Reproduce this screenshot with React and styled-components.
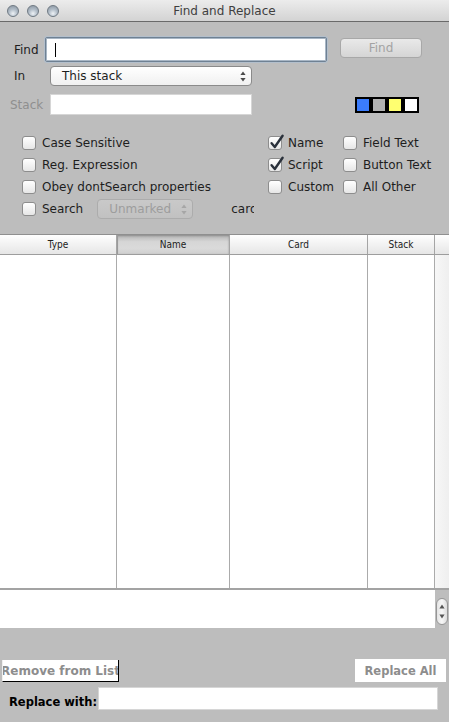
import React from "react";
import styled, { createGlobalStyle } from "styled-components";

const GlobalStyle = createGlobalStyle`
    html, body {
        margin: 0;
        padding: 0;
        background: #bdbdbd;
    }
    * {
        box-sizing: border-box;
    }
`;

const Window = styled.div`
    width: 449px;
    height: 722px;
    overflow: hidden;
    background: #bdbdbd;
    font-family: "DejaVu Sans", "Liberation Sans", sans-serif;
    font-size: 12px;
    color: #1e1e1e;
    display: flex;
    flex-direction: column;
`;

const TitleBar = styled.div`
    height: 22px;
    flex: none;
    display: grid;
    grid-template-columns: 1fr auto 1fr;
    align-items: center;
    background: linear-gradient(#ececec, #d3d3d3);
    border-bottom: 1px solid #6a6a6a;
`;

const Lights = styled.div`
    display: flex;
    gap: 8px;
    padding-left: 7px;
`;

const Light = styled.span`
    width: 12px;
    height: 12px;
    border-radius: 50%;
    border: 1px solid #6f7983;
    background: radial-gradient(circle at 50% 75%, #eef2f6 0%, #b3bec9 45%, #85919d 100%);
`;

const Title = styled.div`
    font-size: 12px;
    color: #3f3f3f;
    padding-top: 1px;
`;

const Form = styled.div`
    display: flex;
    flex-direction: column;
    padding-top: 15px;
`;

const Row = styled.div`
    display: flex;
    align-items: center;
    height: ${({ h }) => h}px;
    margin-top: ${({ mt }) => mt || 0}px;
`;

const Label = styled.span`
    width: ${({ w }) => w}px;
    padding-left: ${({ pl }) => pl}px;
    color: ${({ dim }) => (dim ? "#8f8f8f" : "#1e1e1e")};
    flex: none;
`;

const FindField = styled.div`
    width: 282px;
    height: 25px;
    background: #fff;
    border: 1px solid #6f8193;
    box-shadow: inset 0 0 0 1px #a8b6c5, 0 0 0 1px #b3bfcc;
    border-radius: 2px;
    display: flex;
    align-items: center;
    padding-left: 9px;
`;

const Caret = styled.span`
    width: 1px;
    height: 14px;
    background: #000;
`;

const PushButton = styled.div`
    margin-left: 13px;
    width: 82px;
    height: 20px;
    border: 1px solid #a8a8a8;
    border-radius: 4px;
    background: linear-gradient(#e9e9e9, #d5d5d5);
    color: #a3a3a3;
    display: flex;
    align-items: center;
    justify-content: center;
    align-self: flex-start;
    margin-top: 1px;
`;

const Popup = styled.div`
    width: ${({ w }) => w}px;
    height: 20px;
    border: 1px solid ${({ disabled }) => (disabled ? "#acacac" : "#8a8a8a")};
    border-radius: 4px;
    background: ${({ disabled }) =>
        disabled ? "linear-gradient(#c9c9c9, #c1c1c1)" : "linear-gradient(#ffffff, #f0f0f0)"};
    color: ${({ disabled }) => (disabled ? "#9d9d9d" : "#1e1e1e")};
    display: flex;
    align-items: center;
    justify-content: space-between;
    padding: 0 5px 0 ${({ pl }) => pl}px;
    flex: none;
`;

const PlainField = styled.div`
    width: ${({ w }) => w}px;
    height: ${({ h }) => h}px;
    background: #fff;
    border: 1px solid #d6d6d6;
    flex: none;
`;

const Swatches = styled.div`
    margin-left: 103px;
    display: flex;
    gap: 4px;
    padding: 2px;
    background: #000;
    height: 16px;
`;

const Swatch = styled.span`
    width: 12px;
    height: 12px;
    background: ${({ c }) => c};
`;

const Options = styled.div`
    display: grid;
    grid-template-columns: 246px 75px 1fr;
    grid-auto-rows: 22px;
    align-items: center;
    padding-left: 22px;
    margin-top: 17px;
`;

const CheckItem = styled.div`
    display: flex;
    align-items: center;
    gap: 6px;
    white-space: nowrap;
`;

const Box = styled.span`
    position: relative;
    width: 14px;
    height: 14px;
    border: 1px solid #8d8d8d;
    border-radius: 3px;
    background: linear-gradient(#ffffff, #e6e6e6);
    flex: none;
`;

const Tick = styled.svg`
    position: absolute;
    left: 0px;
    top: -3px;
`;

const SearchRow = styled.div`
    display: flex;
    align-items: center;
    grid-column: 1 / span 3;
`;

const Clipped = styled.span`
    margin-left: 38px;
    width: 23px;
    overflow: hidden;
    white-space: nowrap;
`;

const Table = styled.div`
    margin-top: 14px;
    display: flex;
    flex-direction: column;
`;

const Header = styled.div`
    display: grid;
    grid-template-columns: 117px 113px 138px 67px 14px;
    height: 21px;
    border-top: 1px solid #8f8f8f;
    border-bottom: 1px solid #9d9d9d;
    background: linear-gradient(#fefefe, #e6e6e6);
`;

const HeadCell = styled.div`
    border-right: ${({ last }) => (last ? "none" : "1px solid #a5a5a5")};
    display: flex;
    align-items: center;
    justify-content: center;
    font-family: "DejaVu Sans Condensed", "DejaVu Sans", sans-serif;
    font-size: 10px;
    color: #222;
    background: ${({ active }) =>
        active ? "linear-gradient(#b2b2b2, #d6d6d6 35%, #dadada 70%, #cfcfcf)" : "transparent"};
    box-shadow: ${({ active }) => (active ? "inset 1px 0 0 #9a9a9a, inset 0 1px 2px #8c8c8c" : "none")};
`;

const Body = styled.div`
    display: grid;
    grid-template-columns: 117px 113px 138px 67px 14px;
    height: 335px;
    border-bottom: 2px solid #a3a3a3;
`;

const Column = styled.div`
    border-right: ${({ last }) => (last ? "none" : "1px solid #ababab")};
    background: ${({ last }) => (last ? "linear-gradient(90deg, #f7f7f7, #efefef)" : "#fff")};
`;

const Note = styled.div`
    display: flex;
    height: 38px;
`;

const NoteText = styled.div`
    width: 435px;
    background: #fff;
    border-top: 1px solid #fff;
`;

const NoteScroll = styled.div`
    flex: 1;
    display: flex;
    justify-content: center;
    padding-top: 8px;
`;

const Stepper = styled.div`
    width: 12px;
    height: 27px;
    border: 1px solid #969696;
    border-radius: 6px;
    background: linear-gradient(90deg, #e4e4e4, #f7f7f7, #dcdcdc);
    display: flex;
    flex-direction: column;
    align-items: center;
    justify-content: space-around;
    padding: 3px 0;
`;

const Bottom = styled.div`
    display: flex;
    flex-direction: column;
    padding-top: 31px;
`;

const ButtonRow = styled.div`
    display: flex;
    justify-content: space-between;
    align-items: flex-start;
    padding: 0 3px 0 2px;
`;

const FlatButton = styled.div`
    width: ${({ w }) => w}px;
    height: ${({ h }) => h}px;
    margin-top: ${({ mt }) => mt || 0}px;
    background: #fff;
    border-right: ${({ shadow }) => (shadow ? "1px solid #000" : "none")};
    border-bottom: ${({ shadow }) => (shadow ? "1px solid #000" : "none")};
    border-left: ${({ shadow }) => (shadow ? "1px solid #f0f0f0" : "none")};
    color: #8d8d8d;
    font-weight: bold;
    font-size: ${({ fs }) => fs}px;
    display: flex;
    align-items: center;
    justify-content: center;
    overflow: hidden;
    white-space: nowrap;
`;

const ReplaceRow = styled.div`
    display: flex;
    align-items: center;
    margin-top: 5px;
    padding-left: 9px;
`;

const ReplaceLabel = styled.span`
    width: 89px;
    font-weight: bold;
    font-size: 11.5px;
    color: #000;
    padding-top: 7px;
`;

const Arrows = ({ color = "#4a4a4a" }) => (
    <svg width="6" height="11" viewBox="0 0 6 11">
        <path d="M3 0.5 L5.6 4 L0.4 4 Z" fill={color} />
        <path d="M3 10.5 L5.6 7 L0.4 7 Z" fill={color} />
    </svg>
);

const Check = ({ checked, label }) => (
    <CheckItem>
        <Box>
            {checked && (
                <Tick width="16" height="16" viewBox="0 0 16 16">
                    <path
                        d="M2.6 9.2 L5.8 13 L13.6 1.8"
                        fill="none"
                        stroke="#2a313b"
                        strokeWidth="2.4"
                        strokeLinecap="round"
                        strokeLinejoin="round"
                    />
                </Tick>
            )}
        </Box>
        {label && <span>{label}</span>}
    </CheckItem>
);

export default function App() {
    return (
        <Window>
            <GlobalStyle />
            <TitleBar>
                <Lights>
                    <Light />
                    <Light />
                    <Light />
                </Lights>
                <Title>Find and Replace</Title>
                <span />
            </TitleBar>

            <Form>
                <Row h={25}>
                    <Label w={45} pl={14}>Find</Label>
                    <FindField>
                        <Caret />
                    </FindField>
                    <PushButton>Find</PushButton>
                </Row>
                <Row h={20} mt={4}>
                    <Label w={50} pl={14}>In</Label>
                    <Popup w={202} pl={11}>
                        <span>This stack</span>
                        <Arrows />
                    </Popup>
                </Row>
                <Row h={21} mt={8}>
                    <Label w={50} pl={10} dim>Stack</Label>
                    <PlainField w={202} h={21} />
                    <Swatches>
                        <Swatch c="#3b7cfc" />
                        <Swatch c="#b2b2b2" />
                        <Swatch c="#ffff70" />
                        <Swatch c="#ffffff" />
                    </Swatches>
                </Row>
            </Form>

            <Options>
                <Check label="Case Sensitive" />
                <Check checked label="Name" />
                <Check label="Field Text" />
                <Check label="Reg. Expression" />
                <Check checked label="Script" />
                <Check label="Button Text" />
                <Check label="Obey dontSearch properties" />
                <Check label="Custom" />
                <Check label="All Other" />
                <SearchRow>
                    <Check label="Search" />
                    <span style={{ width: 14 }} />
                    <Popup w={96} pl={11} disabled>
                        <span>Unmarked</span>
                        <Arrows color="#a6a6a6" />
                    </Popup>
                    <Clipped>card</Clipped>
                </SearchRow>
            </Options>

            <Table>
                <Header>
                    <HeadCell>Type</HeadCell>
                    <HeadCell active>Name</HeadCell>
                    <HeadCell>Card</HeadCell>
                    <HeadCell>Stack</HeadCell>
                    <HeadCell last />
                </Header>
                <Body>
                    <Column />
                    <Column />
                    <Column />
                    <Column />
                    <Column last />
                </Body>
                <Note>
                    <NoteText />
                    <NoteScroll>
                        <Stepper>
                            <svg width="6" height="5" viewBox="0 0 6 5">
                                <path d="M3 0.5 L5.6 4.5 L0.4 4.5 Z" fill="#555" />
                            </svg>
                            <svg width="6" height="5" viewBox="0 0 6 5">
                                <path d="M3 4.5 L5.6 0.5 L0.4 0.5 Z" fill="#555" />
                            </svg>
                        </Stepper>
                    </NoteScroll>
                </Note>
            </Table>

            <Bottom>
                <ButtonRow>
                    <FlatButton w={117} h={22} fs={12} mt={1} shadow>
                        Remove from List
                    </FlatButton>
                    <FlatButton w={91} h={23} fs={11.5}>
                        Replace All
                    </FlatButton>
                </ButtonRow>
                <ReplaceRow>
                    <ReplaceLabel>Replace with:</ReplaceLabel>
                    <PlainField w={340} h={23} />
                </ReplaceRow>
            </Bottom>
        </Window>
    );
}
